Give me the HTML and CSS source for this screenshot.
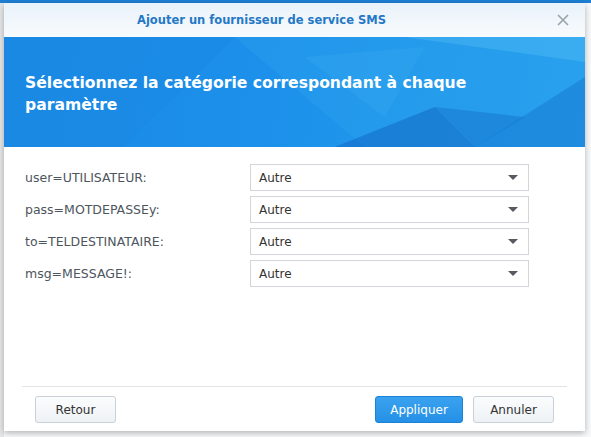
FILE: index.html
```html
<!DOCTYPE html>
<html lang="fr">
<head>
<meta charset="utf-8">
<title>Ajouter un fournisseur de service SMS</title>
<link rel="stylesheet" href="styles.css">
</head>
<body>
<div class="desk">
  <div class="dialog">
    <div class="titlebar">
      <span class="title">Ajouter un fournisseur de service SMS</span>
      <span class="close">
        <svg width="12" height="12" viewBox="0 0 12 12"><path d="M1 1 L11 11 M11 1 L1 11" stroke="#9aa3ab" stroke-width="1.6" fill="none"/></svg>
      </span>
    </div>
    <div class="banner">
      <svg class="facets" viewBox="0 0 580 110" preserveAspectRatio="none">
        <polygon points="230,0 580,0 580,40 470,110 360,110" fill="#2ea4ee" opacity="0.35"/>
        <polygon points="400,0 580,0 580,25" fill="#5cc3f5" opacity="0.35"/>
        <polygon points="300,20 420,10 380,80" fill="#3aaef0" opacity="0.25"/>
        <polygon points="470,110 580,40 580,110" fill="#1b7fd6" opacity="0.6"/>
        <polygon points="330,110 430,70 470,110" fill="#1369c4" opacity="0.55"/>
        <polygon points="430,70 520,80 470,110" fill="#1674cc" opacity="0.5"/>
        <polygon points="0,0 230,0 120,110 0,110" fill="#1a86e2" opacity="0.4"/>
      </svg>
      <h1 class="heading">Sélectionnez la catégorie correspondant à chaque paramètre</h1>
    </div>
    <div class="body">
      <div class="row">
        <span class="label">user=UTILISATEUR:</span>
        <div class="select"><span>Autre</span><i class="arrow"></i></div>
      </div>
      <div class="row">
        <span class="label">pass=MOTDEPASSEy:</span>
        <div class="select"><span>Autre</span><i class="arrow"></i></div>
      </div>
      <div class="row">
        <span class="label">to=TELDESTINATAIRE:</span>
        <div class="select"><span>Autre</span><i class="arrow"></i></div>
      </div>
      <div class="row">
        <span class="label">msg=MESSAGE!:</span>
        <div class="select"><span>Autre</span><i class="arrow"></i></div>
      </div>
    </div>
    <div class="footer">
      <button class="btn">Retour</button>
      <div class="spacer"></div>
      <button class="btn primary">Appliquer</button>
      <button class="btn">Annuler</button>
    </div>
  </div>
</div>
</body>
</html>
```
FILE: styles.css
```css
html, body {
  margin: 0;
  padding: 0;
}
body {
  width: 591px;
  height: 437px;
  overflow: hidden;
  background: #eef0f2;
  font-family: "DejaVu Sans", Verdana, sans-serif;
}
.desk {
  height: 437px;
  background: linear-gradient(to right, #e4e6e8 0, #e4e6e8 4px, #f7f8f9 4px);
  border-top: 3px solid #1d7fd3;
  box-sizing: border-box;
}
.dialog {
  margin-left: 4px;
  width: 581px;
  height: 428px;
  background: #fff;
  display: flex;
  flex-direction: column;
  box-shadow: 0 2px 6px rgba(0,0,0,0.28);
}
.titlebar {
  height: 34px;
  flex: none;
  display: flex;
  align-items: center;
  padding-left: 133px;
  position: relative;
  background: linear-gradient(#e9f2fa, #f8fbfd);
}
.title {
  font-weight: bold;
  font-size: 11.5px;
  color: #2578c6;
}
.close {
  position: absolute;
  right: 16px;
  top: 11px;
  width: 12px;
  height: 12px;
  display: flex;
}
.banner {
  height: 110px;
  flex: none;
  position: relative;
  overflow: hidden;
  background: linear-gradient(100deg, #1a8ae6 0%, #1c90ea 45%, #26a0ee 100%);
  box-sizing: border-box;
  padding: 35px 21px 0 21px;
}
.facets {
  position: absolute;
  left: 0;
  top: 0;
  width: 100%;
  height: 100%;
}
.heading {
  position: relative;
  margin: 0;
  max-width: 490px;
  font-size: 15.6px;
  line-height: 22px;
  font-weight: bold;
  color: #fff;
}
.body {
  flex: 1;
  padding: 17px 0 0 21px;
  display: flex;
  flex-direction: column;
  gap: 5px;
}
.row {
  display: grid;
  grid-template-columns: 225px 279px;
  align-items: center;
  height: 27px;
}
.label {
  font-size: 12.5px;
  color: #4d555d;
}
.select {
  height: 27px;
  box-sizing: border-box;
  border: 1px solid #d2d6da;
  background: #fff;
  display: flex;
  align-items: center;
  padding: 0 10px 0 8px;
  font-size: 12px;
  color: #333;
}
.select span {
  flex: 1;
}
.arrow {
  width: 0;
  height: 0;
  border-left: 5px solid transparent;
  border-right: 5px solid transparent;
  border-top: 5px solid #555b61;
}
.footer {
  flex: none;
  margin: 0 18px;
  border-top: 1px solid #e2e5e8;
  padding: 9px 13px 8px 13px;
  display: flex;
  gap: 10px;
}
.spacer {
  flex: 1;
}
.btn {
  height: 27px;
  width: 81px;
  box-sizing: border-box;
  border: 1px solid #c9d0d7;
  border-radius: 3px;
  background: linear-gradient(#fbfcfd, #eef2f6);
  font-family: "DejaVu Sans", Verdana, sans-serif;
  font-size: 12px;
  color: #333;
  padding: 0;
}
.btn.primary {
  width: 88px;
  border-color: #1a83d8;
  background: linear-gradient(#3aa2ef, #2590e6);
  color: #fff;
}
```
